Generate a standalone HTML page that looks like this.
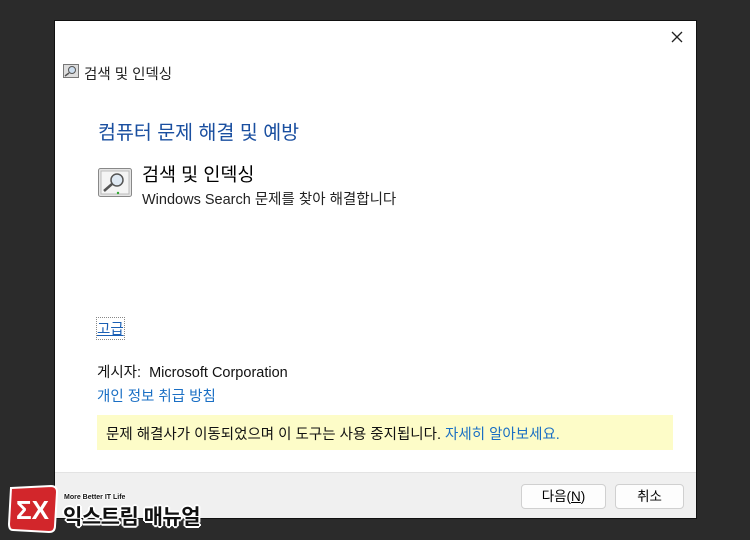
<!DOCTYPE html>
<html><head><meta charset="utf-8"><style>
*{margin:0;padding:0;box-sizing:border-box}
body{width:750px;height:540px;background:#2b2b2b;position:relative;overflow:hidden;font-family:"Liberation Sans","Noto Sans CJK KR",sans-serif;color:#000}
.win{position:absolute;left:54px;top:20px;width:643px;height:499px;background:#fff;border:1px solid #111}
.a{position:absolute;white-space:nowrap}
.foot{position:absolute;left:0;right:0;top:451px;bottom:0;background:#f0f0f0;border-top:1px solid #e3e3e3}
.btn{position:absolute;top:11px;height:25px;background:#fdfdfd;border:1px solid #d0d0d0;border-radius:4px;font-size:13.5px;text-align:center;line-height:23px}
</style></head><body>
<div class="win">
 <svg class="a" style="left:616px;top:10px" width="12" height="12"><path d="M1 1L11 11M11 1L1 11" stroke="#222" stroke-width="1.3"/></svg>
 <svg class="a" style="left:8px;top:43px" width="16" height="14"><rect x="0.5" y="0.5" width="15" height="13" fill="#ddd" stroke="#777"/><circle cx="9" cy="6" r="3.5" fill="#cde" stroke="#555"/><line x1="6" y1="9" x2="2" y2="12" stroke="#555" stroke-width="1.5"/></svg>
 <div class="a" style="left:29px;top:42px;font-size:14.5px;color:#222">검색 및 인덱싱</div>
 <div class="a" style="left:43px;top:95px;font-size:19.5px;color:#1a4fa0">컴퓨터 문제 해결 및 예방</div>
 <svg class="a" style="left:43px;top:147px" width="34" height="29"><rect x="0.5" y="0.5" width="33" height="28" rx="2" fill="#e4e4e4" stroke="#888"/><rect x="3" y="3" width="28" height="23" fill="#f4f4f4" stroke="#bbb"/><circle cx="19" cy="12" r="6" fill="#dfe9f3" stroke="#555" stroke-width="1.5"/><line x1="14" y1="16" x2="6" y2="23" stroke="#555" stroke-width="2.5"/><circle cx="20" cy="25" r="1.2" fill="#3a3"/></svg>
 <div class="a" style="left:87px;top:140px;font-size:18.5px">검색 및 인덱싱</div>
 <div class="a" style="left:87px;top:167px;font-size:14.5px;color:#222">Windows Search 문제를 찾아 해결합니다</div>
 <div class="a" style="left:42px;top:297px;font-size:14.5px;color:#1a5fb4;text-decoration:underline;outline:1px dotted #888">고급</div>
 <div class="a" style="left:42px;top:340px;font-size:14.5px;color:#111">게시자:&nbsp; Microsoft Corporation</div>
 <div class="a" style="left:42px;top:364px;font-size:14.5px;color:#1a6fc4">개인 정보 취급 방침</div>
 <div class="a" style="left:42px;top:394px;width:576px;height:35px;background:#fdfcc8"></div>
 <div class="a" style="left:51px;top:402px;font-size:14.5px;color:#111">문제 해결사가 이동되었으며 이 도구는 사용 중지됩니다. <span style="color:#1a6fc4">자세히 알아보세요.</span></div>
 <div class="foot">
  <div class="btn" style="left:466px;width:85px">다음(<u>N</u>)</div>
  <div class="btn" style="left:560px;width:69px">취소</div>
 </div>
</div>
<svg class="a" style="left:7px;top:484px" width="52" height="50"><path d="M4 4 L44 2 Q50 2 50 8 L48 42 Q48 48 42 48 L6 46 Q2 46 2 40 Z" fill="#d2262b" stroke="#fff" stroke-width="2"/><text x="9" y="35" font-family="Liberation Sans" font-weight="bold" font-size="26" fill="#fff">ΣX</text></svg>
<div class="a" style="left:64px;top:494px;font-size:7px;font-weight:bold;color:#111;text-shadow:-1px 0 #fff,1px 0 #fff,0 -1px #fff,0 1px #fff">More Better IT Life</div>
<div class="a" style="left:63px;top:501px;font-size:21px;font-weight:bold;color:#111;letter-spacing:-0.5px;text-shadow:-2px 0 #fff,2px 0 #fff,0 -2px #fff,0 2px #fff,-1px -1px #fff,1px 1px #fff,-1px 1px #fff,1px -1px #fff">익스트림 매뉴얼</div>
</body></html>
